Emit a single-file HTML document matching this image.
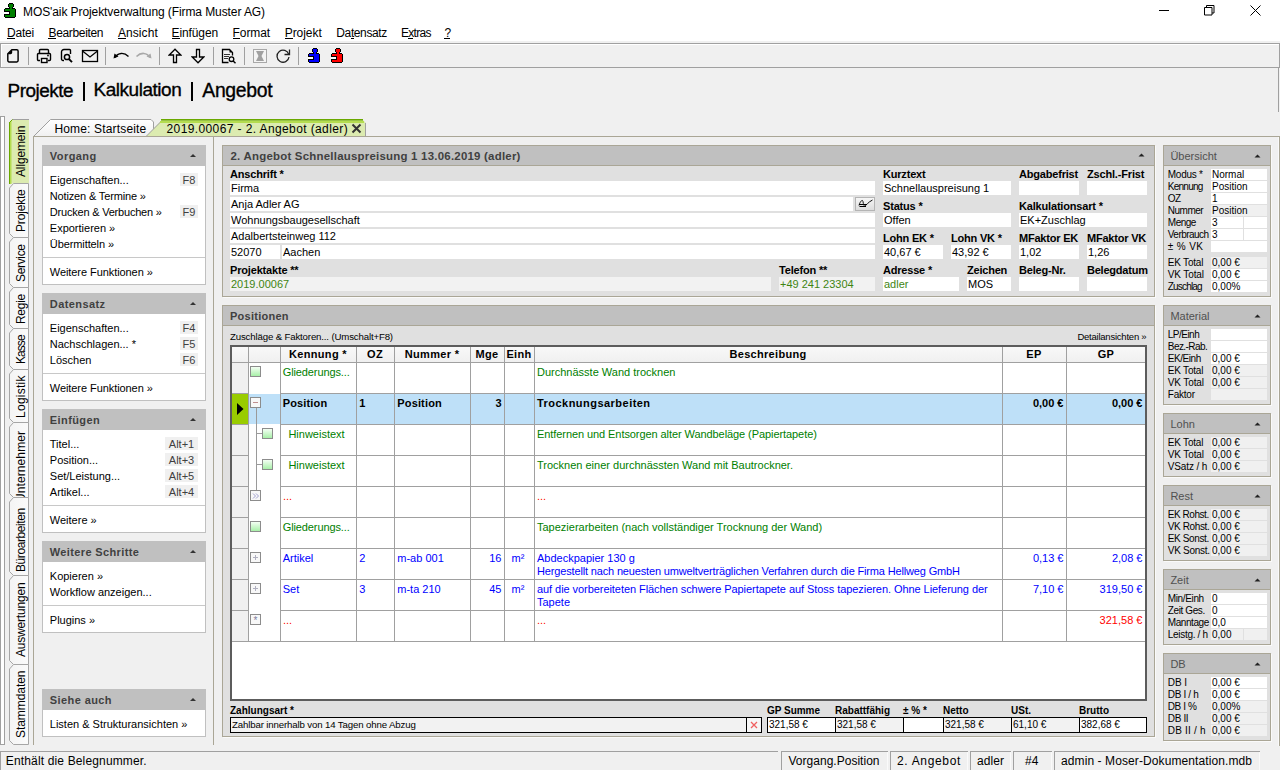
<!DOCTYPE html><html><head><meta charset="utf-8"><title>MOS'aik</title><style>
*{margin:0;padding:0}
html,body{width:1280px;height:770px;overflow:hidden;background:#f0f0f0;font-family:"Liberation Sans",sans-serif;}
.t{position:absolute;white-space:pre;line-height:1;color:#000}
.r{position:absolute}
svg{position:absolute}
</style></head><body><div class="r" style="left:0px;top:0px;width:1280px;height:41px;background:#fff;"></div>
<svg style="left:0px;top:0px" width="20" height="20" viewBox="0 0 20 20" shape-rendering="crispEdges"><rect x="9" y="3" width="4" height="1" fill="#000"/><rect x="8" y="4" width="6" height="3" fill="#000"/><rect x="9" y="7" width="4" height="1" fill="#000"/><rect x="5" y="8" width="10" height="1" fill="#000"/><rect x="4" y="9" width="12" height="8" fill="#000"/><rect x="5" y="17" width="10" height="1" fill="#000"/><rect x="9" y="4" width="4" height="3" fill="#008000"/><rect x="10" y="7" width="2" height="2" fill="#008000"/><rect x="5" y="9" width="10" height="8" fill="#008000"/><rect x="5" y="11" width="5" height="1" fill="#000"/><rect x="5" y="14" width="5" height="1" fill="#000"/><rect x="9" y="12" width="1" height="2" fill="#000"/><rect x="4" y="12" width="5" height="2" fill="#fff"/></svg>
<div class="t" style="left:23.00px;top:6px;font-size:12px;letter-spacing:-0.085px;">MOS&#x27;aik Projektverwaltung (Firma Muster AG)</div>
<div class="r" style="left:1159px;top:10px;width:10px;height:1px;background:#000;"></div>
<svg style="left:1203px;top:4px" width="13" height="13" viewBox="0 0 13 13"><path d="M1.5 3.5h7.5v7.5h-7.5z M3.5 3.5v-2h7.5v7.5h-2" fill="none" stroke="#000" stroke-width="1"/></svg>
<svg style="left:1249px;top:4px" width="13" height="13" viewBox="0 0 13 13"><path d="M1.5 1.5L11.5 11.5M11.5 1.5L1.5 11.5" stroke="#000" stroke-width="1"/></svg>
<div class="t" style="left:7.00px;top:27px;font-size:12px;letter-spacing:-0.203px;">Datei</div>
<div class="r" style="left:7px;top:38px;width:8px;height:1px;background:#000;"></div>
<div class="t" style="left:48.50px;top:27px;font-size:12px;letter-spacing:-0.343px;">Bearbeiten</div>
<div class="r" style="left:48px;top:38px;width:8px;height:1px;background:#000;"></div>
<div class="t" style="left:118.00px;top:27px;font-size:12px;letter-spacing:0.065px;">Ansicht</div>
<div class="r" style="left:118px;top:38px;width:8px;height:1px;background:#000;"></div>
<div class="t" style="left:171.60px;top:27px;font-size:12px;letter-spacing:-0.120px;">Einfügen</div>
<div class="r" style="left:172px;top:38px;width:8px;height:1px;background:#000;"></div>
<div class="t" style="left:232.60px;top:27px;font-size:12px;letter-spacing:-0.100px;">Format</div>
<div class="r" style="left:233px;top:38px;width:7px;height:1px;background:#000;"></div>
<div class="t" style="left:284.70px;top:27px;font-size:12px;letter-spacing:-0.049px;">Projekt</div>
<div class="r" style="left:285px;top:38px;width:8px;height:1px;background:#000;"></div>
<div class="t" style="left:336.30px;top:27px;font-size:12px;letter-spacing:-0.380px;">Datensatz</div>
<div class="r" style="left:351px;top:38px;width:3px;height:1px;background:#000;"></div>
<div class="t" style="left:401.00px;top:27px;font-size:12px;letter-spacing:-0.717px;">Extras</div>
<div class="r" style="left:408px;top:38px;width:5px;height:1px;background:#000;"></div>
<div class="t" style="left:444.50px;top:27px;font-size:12px;">?</div>
<div class="r" style="left:444px;top:38px;width:6px;height:1px;background:#000;"></div>
<div class="r" style="left:0px;top:43px;width:1280px;height:25px;background:#f0f0f0;border-top:1px solid #a0a0a0;border-bottom:1px solid #a0a0a0;border-left:1px solid #a0a0a0;border-right:1px solid #a0a0a0;box-sizing:border-box;"></div>
<div class="r" style="left:1px;top:44px;width:1278px;height:1px;background:#fff;"></div>
<div class="r" style="left:1px;top:44px;width:1px;height:23px;background:#fff;"></div>
<div class="r" style="left:28px;top:47px;width:1px;height:18px;background:#a0a0a0;"></div>
<div class="r" style="left:105px;top:47px;width:1px;height:18px;background:#a0a0a0;"></div>
<div class="r" style="left:159px;top:47px;width:1px;height:18px;background:#a0a0a0;"></div>
<div class="r" style="left:213px;top:47px;width:1px;height:18px;background:#a0a0a0;"></div>
<div class="r" style="left:244px;top:47px;width:1px;height:18px;background:#a0a0a0;"></div>
<div class="r" style="left:298px;top:47px;width:1px;height:18px;background:#a0a0a0;"></div>
<svg style="left:6px;top:48px" width="15" height="16" viewBox="0 0 15 16"><path d="M5.8 1.8H10.8a1.3 1.3 0 0 1 1.3 1.3V12.6a1.3 1.3 0 0 1-1.3 1.3H3.1a1.3 1.3 0 0 1-1.3-1.3V5.8Z" fill="none" stroke="#000" stroke-width="1.45" stroke-linejoin="round"/><path d="M1.5 6.2L6.2 1.5V4.6a1.6 1.6 0 0 1-1.6 1.6Z" fill="#000"/></svg>
<svg style="left:36px;top:48px" width="16" height="16" viewBox="0 0 16 16"><path d="M3.5 5V2.5a1 1 0 0 1 1-1h7a1 1 0 0 1 1 1V5" fill="none" stroke="#000" stroke-width="1.4"/><path d="M4 12.5H2.5a1 1 0 0 1-1-1V6.5a1 1 0 0 1 1-1h11a1 1 0 0 1 1 1v5a1 1 0 0 1-1 1H12" fill="none" stroke="#000" stroke-width="1.4"/><rect x="5.5" y="10.5" width="5.5" height="4" fill="#fff" stroke="#000" stroke-width="1.4"/><circle cx="12" cy="7.5" r="0.9" fill="#000"/></svg>
<svg style="left:60px;top:48px" width="14" height="16" viewBox="0 0 14 16"><path d="M10.5 6V2.5a1 1 0 0 0-1-1H4a2.5 2.5 0 0 0-2.5 2.5V11a1.5 1.5 0 0 0 1.5 1.5H4" fill="none" stroke="#000" stroke-width="1.4"/><circle cx="7" cy="9" r="2.6" fill="#f0f0f0" stroke="#000" stroke-width="1.5"/><path d="M8.8 10.8l3.2 3.4" stroke="#000" stroke-width="1.9"/></svg>
<svg style="left:81px;top:49px" width="18" height="14" viewBox="0 0 18 14"><rect x="1.5" y="1.5" width="15" height="11" fill="none" stroke="#000" stroke-width="1.3"/><path d="M1.5 2l7.5 6 7.5-6" fill="none" stroke="#000" stroke-width="1.3"/></svg>
<svg style="left:112px;top:50px" width="18" height="11" viewBox="0 0 18 11"><path d="M3 7.5C6 2.5 12 2 16.5 6.5" fill="none" stroke="#000" stroke-width="1.4"/><path d="M1.5 8.5l1-5 4 3z" fill="#000"/></svg>
<svg style="left:135px;top:50px" width="18" height="11" viewBox="0 0 18 11"><path d="M1.5 6.5C6 2 12 2.5 15 7.5" fill="none" stroke="#a8a8a8" stroke-width="1.6"/><path d="M16.5 8.5l-1-5-4 3z" fill="#a8a8a8"/></svg>
<svg style="left:168px;top:48px" width="14" height="16" viewBox="0 0 14 16"><path d="M7 1.2L1.2 7H5.5V14.5H8.5V7H12.8Z" fill="#f0f0f0" stroke="#000" stroke-width="1.3" stroke-linejoin="miter"/></svg>
<svg style="left:191px;top:48px" width="14" height="16" viewBox="0 0 14 16"><path d="M7 14.8L1.2 9H5.5V1.5H8.5V9H12.8Z" fill="#f0f0f0" stroke="#000" stroke-width="1.3"/></svg>
<svg style="left:221px;top:48px" width="16" height="16" viewBox="0 0 16 16"><path d="M7.5 14.5H1.5V1.5H8.5L11.5 4.5V7.5" fill="none" stroke="#000" stroke-width="1.3"/><path d="M8.5 1.5V4.5H11.5Z" fill="#000"/><path d="M3 6.5H9M3 8.5H8M3 10.5H7" stroke="#333" stroke-width="1"/><circle cx="10.5" cy="11.2" r="2.3" fill="#f0f0f0" stroke="#000" stroke-width="1.3"/><path d="M12.2 12.9L14.5 15.2" stroke="#000" stroke-width="1.4"/></svg>
<svg style="left:252px;top:48px" width="16" height="16" viewBox="0 0 16 16"><rect x="1.5" y="1.5" width="13" height="13" fill="#f4f4f4" stroke="#a8a8a8" stroke-width="1"/><path d="M4 3h8l-2.5 5 2.5 5h-8l2.5-5z" fill="#a0a0a0"/></svg>
<svg style="left:275px;top:48px" width="16" height="16" viewBox="0 0 16 16"><path d="M13.8 6.5A6 6 0 1 0 14 9" fill="none" stroke="#222" stroke-width="1.3"/><path d="M14.5 1.5V6.5H9.5" fill="none" stroke="#222" stroke-width="1.3"/></svg>
<svg style="left:304px;top:45px" width="20" height="20" viewBox="0 0 20 20" shape-rendering="crispEdges"><rect x="9" y="3" width="4" height="1" fill="#000"/><rect x="8" y="4" width="6" height="3" fill="#000"/><rect x="9" y="7" width="4" height="1" fill="#000"/><rect x="5" y="8" width="10" height="1" fill="#000"/><rect x="4" y="9" width="12" height="8" fill="#000"/><rect x="5" y="17" width="10" height="1" fill="#000"/><rect x="9" y="4" width="4" height="3" fill="#0000ff"/><rect x="10" y="7" width="2" height="2" fill="#0000ff"/><rect x="5" y="9" width="10" height="8" fill="#0000ff"/><rect x="5" y="11" width="5" height="1" fill="#000"/><rect x="5" y="14" width="5" height="1" fill="#000"/><rect x="9" y="12" width="1" height="2" fill="#000"/><rect x="4" y="12" width="5" height="2" fill="#fff"/></svg>
<svg style="left:327px;top:45px" width="20" height="20" viewBox="0 0 20 20" shape-rendering="crispEdges"><rect x="9" y="3" width="4" height="1" fill="#000"/><rect x="8" y="4" width="6" height="3" fill="#000"/><rect x="9" y="7" width="4" height="1" fill="#000"/><rect x="5" y="8" width="10" height="1" fill="#000"/><rect x="4" y="9" width="12" height="8" fill="#000"/><rect x="5" y="17" width="10" height="1" fill="#000"/><rect x="9" y="4" width="4" height="3" fill="#ff0000"/><rect x="10" y="7" width="2" height="2" fill="#ff0000"/><rect x="5" y="9" width="10" height="8" fill="#ff0000"/><rect x="5" y="11" width="5" height="1" fill="#000"/><rect x="5" y="14" width="5" height="1" fill="#000"/><rect x="9" y="12" width="1" height="2" fill="#000"/><rect x="4" y="12" width="5" height="2" fill="#fff"/></svg>
<div class="t" style="left:7.50px;top:82px;font-size:18.93px;letter-spacing:-0.492px;-webkit-text-stroke:0.35px #000;">Projekte</div>
<div class="r" style="left:83px;top:82px;width:2px;height:19px;background:#000;"></div>
<div class="t" style="left:93.50px;top:81px;font-size:18.97px;letter-spacing:-0.454px;-webkit-text-stroke:0.35px #000;">Kalkulation</div>
<div class="r" style="left:191px;top:82px;width:2px;height:19px;background:#000;"></div>
<div class="t" style="left:202.30px;top:81px;font-size:19.39px;letter-spacing:-0.317px;-webkit-text-stroke:0.35px #000;">Angebot</div>
<div class="r" style="left:1278px;top:68px;width:1px;height:44px;background:#a0a0a0;"></div>
<div class="r" style="left:0px;top:116px;width:5px;height:629px;background:#fff;border:1px solid #a0a0a0;box-sizing:border-box;border-width:1px 1px 1px 1px;"></div>
<svg style="left:0px;top:113px" width="34" height="76" viewBox="0 113 34 76"><path d="M9 122.5L12.5 119H29V183.5H9Z" fill="#dcebb0"/><path d="M29 119.5H12.5L9.5 122.5V183.5" fill="none" stroke="#a0a0a0" stroke-width="1"/><rect x="9" y="122" width="1" height="62" fill="#6aa800"/><rect x="10" y="121" width="1.5" height="63" fill="#b4dc50"/><path d="M9.5 122.5L12.5 119.5" stroke="#6aa800" stroke-width="1"/></svg>
<div class="t" style="left:14.5px;top:177.0px;font-size:12px;letter-spacing:-0.145px;transform-origin:0 0;transform:rotate(-90deg);">Allgemein</div>
<svg style="left:0px;top:178px" width="34" height="65" viewBox="0 178 34 65"><defs><linearGradient id="tg1" x1="0" y1="0" x2="1" y2="0"><stop offset="0" stop-color="#f4f4f4"/><stop offset="1" stop-color="#fbfbfb"/></linearGradient></defs><path d="M9.5 188L13.5 183.5H28.5V237.5H13.5L9.5 233.5Z" fill="url(#tg1)" stroke="#a6a6a6" stroke-width="1"/></svg>
<div class="t" style="left:14.5px;top:232.3px;font-size:12px;letter-spacing:-0.177px;transform-origin:0 0;transform:rotate(-90deg);">Projekte</div>
<svg style="left:0px;top:232px" width="34" height="61" viewBox="0 232 34 61"><defs><linearGradient id="tg2" x1="0" y1="0" x2="1" y2="0"><stop offset="0" stop-color="#f4f4f4"/><stop offset="1" stop-color="#fbfbfb"/></linearGradient></defs><path d="M9.5 242L13.5 237.5H28.5V287.5H13.5L9.5 283.5Z" fill="url(#tg2)" stroke="#a6a6a6" stroke-width="1"/></svg>
<div class="t" style="left:14.5px;top:282.0px;font-size:12px;letter-spacing:-0.331px;transform-origin:0 0;transform:rotate(-90deg);">Service</div>
<svg style="left:0px;top:282px" width="34" height="52" viewBox="0 282 34 52"><defs><linearGradient id="tg3" x1="0" y1="0" x2="1" y2="0"><stop offset="0" stop-color="#f4f4f4"/><stop offset="1" stop-color="#fbfbfb"/></linearGradient></defs><path d="M9.5 292L13.5 287.5H28.5V328.5H13.5L9.5 324.5Z" fill="url(#tg3)" stroke="#a6a6a6" stroke-width="1"/></svg>
<div class="t" style="left:14.5px;top:323.5px;font-size:12px;letter-spacing:-0.292px;transform-origin:0 0;transform:rotate(-90deg);">Regie</div>
<svg style="left:0px;top:323px" width="34" height="52" viewBox="0 323 34 52"><defs><linearGradient id="tg4" x1="0" y1="0" x2="1" y2="0"><stop offset="0" stop-color="#f4f4f4"/><stop offset="1" stop-color="#fbfbfb"/></linearGradient></defs><path d="M9.5 333L13.5 328.5H28.5V369.5H13.5L9.5 365.5Z" fill="url(#tg4)" stroke="#a6a6a6" stroke-width="1"/></svg>
<div class="t" style="left:14.5px;top:363.8px;font-size:12px;letter-spacing:-0.949px;transform-origin:0 0;transform:rotate(-90deg);">Kasse</div>
<svg style="left:0px;top:364px" width="34" height="64" viewBox="0 364 34 64"><defs><linearGradient id="tg5" x1="0" y1="0" x2="1" y2="0"><stop offset="0" stop-color="#f4f4f4"/><stop offset="1" stop-color="#fbfbfb"/></linearGradient></defs><path d="M9.5 374L13.5 369.5H28.5V422.5H13.5L9.5 418.5Z" fill="url(#tg5)" stroke="#a6a6a6" stroke-width="1"/></svg>
<div class="t" style="left:14.5px;top:418.3px;font-size:12px;letter-spacing:0.264px;transform-origin:0 0;transform:rotate(-90deg);">Logistik</div>
<svg style="left:0px;top:417px" width="34" height="86" viewBox="0 417 34 86"><defs><linearGradient id="tg6" x1="0" y1="0" x2="1" y2="0"><stop offset="0" stop-color="#f4f4f4"/><stop offset="1" stop-color="#fbfbfb"/></linearGradient></defs><path d="M9.5 427L13.5 422.5H28.5V497.5H13.5L9.5 493.5Z" fill="url(#tg6)" stroke="#a6a6a6" stroke-width="1"/></svg>
<div class="t" style="left:14.5px;top:501.5px;font-size:12px;letter-spacing:0.097px;transform-origin:0 0;transform:rotate(-90deg);">Unternehmer</div>
<svg style="left:0px;top:492px" width="34" height="89" viewBox="0 492 34 89"><defs><linearGradient id="tg7" x1="0" y1="0" x2="1" y2="0"><stop offset="0" stop-color="#f4f4f4"/><stop offset="1" stop-color="#fbfbfb"/></linearGradient></defs><path d="M9.5 502L13.5 497.5H28.5V575.5H13.5L9.5 571.5Z" fill="url(#tg7)" stroke="#a6a6a6" stroke-width="1"/></svg>
<div class="t" style="left:14.5px;top:572.0px;font-size:12px;letter-spacing:-0.417px;transform-origin:0 0;transform:rotate(-90deg);">Büroarbeiten</div>
<svg style="left:0px;top:570px" width="34" height="100" viewBox="0 570 34 100"><defs><linearGradient id="tg8" x1="0" y1="0" x2="1" y2="0"><stop offset="0" stop-color="#f4f4f4"/><stop offset="1" stop-color="#fbfbfb"/></linearGradient></defs><path d="M9.5 580L13.5 575.5H28.5V664.5H13.5L9.5 660.5Z" fill="url(#tg8)" stroke="#a6a6a6" stroke-width="1"/></svg>
<div class="t" style="left:14.5px;top:656.7px;font-size:12px;letter-spacing:-0.192px;transform-origin:0 0;transform:rotate(-90deg);">Auswertungen</div>
<svg style="left:0px;top:659px" width="34" height="91" viewBox="0 659 34 91"><defs><linearGradient id="tg9" x1="0" y1="0" x2="1" y2="0"><stop offset="0" stop-color="#f4f4f4"/><stop offset="1" stop-color="#fbfbfb"/></linearGradient></defs><path d="M9.5 669L13.5 664.5H28.5V744.5H13.5L9.5 740.5Z" fill="url(#tg9)" stroke="#a6a6a6" stroke-width="1"/></svg>
<div class="t" style="left:14.5px;top:738.0px;font-size:12px;letter-spacing:-0.062px;transform-origin:0 0;transform:rotate(-90deg);">Stammdaten</div>
<svg style="left:30px;top:114px" width="345" height="24" viewBox="30 114 345 24"><defs><linearGradient id="ht" x1="0" y1="0" x2="0" y2="1"><stop offset="0" stop-color="#ffffff"/><stop offset="1" stop-color="#f0f0f0"/></linearGradient></defs><path d="M33.5 136.5L50.5 119.5H151L153.5 122V136.5Z" fill="url(#ht)" stroke="#a0a0a0" stroke-width="1"/><path d="M146 136.5L162 120H363L366 123V136.5Z" fill="#dcebb0"/><path d="M146.5 136L161.5 121" fill="none" stroke="#a0a0a0" stroke-width="1"/><rect x="160" y="121" width="204" height="2" fill="#b4dc50"/><rect x="161" y="119" width="202" height="1.6" fill="#6aa800"/><path d="M365.5 123V136" stroke="#a0a0a0" stroke-width="1"/></svg>
<div class="t" style="left:54.40px;top:122.6px;font-size:12px;letter-spacing:0.166px;">Home: Startseite</div>
<div class="t" style="left:166.50px;top:122.6px;font-size:12px;letter-spacing:0.390px;">2019.00067 - 2. Angebot (adler)</div>
<svg style="left:351px;top:123px" width="11" height="11" viewBox="0 0 11 11"><path d="M1.5 1.5L9.5 9.5M9.5 1.5L1.5 9.5" stroke="#333" stroke-width="2"/></svg>
<div class="r" style="left:33px;top:136px;width:1247px;height:1px;background:#aaa696;"></div>
<div class="r" style="left:33px;top:136px;width:1px;height:609px;background:#aaa696;"></div>
<div class="r" style="left:1279px;top:136px;width:1px;height:610px;background:#aaa696;"></div>
<div class="r" style="left:1278px;top:137px;width:1px;height:609px;background:#fafafa;"></div>
<div class="r" style="left:213px;top:137px;width:1px;height:608px;background:#aaa696;"></div>
<div class="r" style="left:42px;top:145px;width:164px;height:21px;background:#c0c0c0;"></div>
<div class="t" style="left:49.80px;top:151px;font-size:11px;font-weight:bold;color:#404040;letter-spacing:0.438px;">Vorgang</div>
<svg style="left:189px;top:153px" width="8" height="5" viewBox="0 0 8 5"><path d="M1 4L4 1L7 4Z" fill="#333"/></svg>
<div class="r" style="left:42px;top:166px;width:164px;height:119px;background:#fff;border:1px solid #c0c0c0;border-top:none;box-sizing:border-box;"></div>
<div class="t" style="left:49.80px;top:175px;font-size:11px;">Eigenschaften...</div>
<div class="r" style="left:180px;top:173px;width:18px;height:13px;background:#f0f0f0;"></div>
<div class="t" style="left:182.58px;top:175px;font-size:11px;color:#404040;">F8</div>
<div class="t" style="left:49.80px;top:191px;font-size:11px;letter-spacing:-0.152px;">Notizen &amp; Termine »</div>
<div class="t" style="left:49.80px;top:207px;font-size:11px;letter-spacing:-0.203px;">Drucken &amp; Verbuchen »</div>
<div class="r" style="left:180px;top:205px;width:18px;height:13px;background:#f0f0f0;"></div>
<div class="t" style="left:182.58px;top:207px;font-size:11px;color:#404040;">F9</div>
<div class="t" style="left:49.80px;top:223px;font-size:11px;">Exportieren »</div>
<div class="t" style="left:49.80px;top:239px;font-size:11px;letter-spacing:-0.095px;">Übermitteln »</div>
<div class="r" style="left:43px;top:257px;width:162px;height:1px;background:#c8c8c8;"></div>
<div class="t" style="left:49.80px;top:267px;font-size:11px;letter-spacing:-0.071px;">Weitere Funktionen »</div>
<div class="r" style="left:42px;top:293px;width:164px;height:21px;background:#c0c0c0;"></div>
<div class="t" style="left:49.80px;top:299px;font-size:11px;font-weight:bold;color:#404040;letter-spacing:0.404px;">Datensatz</div>
<svg style="left:189px;top:301px" width="8" height="5" viewBox="0 0 8 5"><path d="M1 4L4 1L7 4Z" fill="#333"/></svg>
<div class="r" style="left:42px;top:314px;width:164px;height:87px;background:#fff;border:1px solid #c0c0c0;border-top:none;box-sizing:border-box;"></div>
<div class="t" style="left:49.80px;top:323px;font-size:11px;">Eigenschaften...</div>
<div class="r" style="left:180px;top:321px;width:18px;height:13px;background:#f0f0f0;"></div>
<div class="t" style="left:182.58px;top:323px;font-size:11px;color:#404040;">F4</div>
<div class="t" style="left:49.80px;top:339px;font-size:11px;">Nachschlagen... *</div>
<div class="r" style="left:180px;top:337px;width:18px;height:13px;background:#f0f0f0;"></div>
<div class="t" style="left:182.58px;top:339px;font-size:11px;color:#404040;">F5</div>
<div class="t" style="left:49.80px;top:355px;font-size:11px;">Löschen</div>
<div class="r" style="left:180px;top:353px;width:18px;height:13px;background:#f0f0f0;"></div>
<div class="t" style="left:182.58px;top:355px;font-size:11px;color:#404040;">F6</div>
<div class="r" style="left:43px;top:373px;width:162px;height:1px;background:#c8c8c8;"></div>
<div class="t" style="left:49.80px;top:383px;font-size:11px;letter-spacing:-0.071px;">Weitere Funktionen »</div>
<div class="r" style="left:42px;top:409px;width:164px;height:21px;background:#c0c0c0;"></div>
<div class="t" style="left:49.80px;top:415px;font-size:11px;font-weight:bold;color:#404040;letter-spacing:0.412px;">Einfügen</div>
<svg style="left:189px;top:417px" width="8" height="5" viewBox="0 0 8 5"><path d="M1 4L4 1L7 4Z" fill="#333"/></svg>
<div class="r" style="left:42px;top:430px;width:164px;height:103px;background:#fff;border:1px solid #c0c0c0;border-top:none;box-sizing:border-box;"></div>
<div class="t" style="left:49.80px;top:439px;font-size:11px;">Titel...</div>
<div class="r" style="left:165px;top:437px;width:33px;height:13px;background:#f0f0f0;"></div>
<div class="t" style="left:168.80px;top:439px;font-size:11px;color:#404040;">Alt+1</div>
<div class="t" style="left:49.80px;top:455px;font-size:11px;">Position...</div>
<div class="r" style="left:165px;top:453px;width:33px;height:13px;background:#f0f0f0;"></div>
<div class="t" style="left:168.80px;top:455px;font-size:11px;color:#404040;">Alt+3</div>
<div class="t" style="left:49.80px;top:471px;font-size:11px;">Set/Leistung...</div>
<div class="r" style="left:165px;top:469px;width:33px;height:13px;background:#f0f0f0;"></div>
<div class="t" style="left:168.80px;top:471px;font-size:11px;color:#404040;">Alt+5</div>
<div class="t" style="left:49.80px;top:487px;font-size:11px;">Artikel...</div>
<div class="r" style="left:165px;top:485px;width:33px;height:13px;background:#f0f0f0;"></div>
<div class="t" style="left:168.80px;top:487px;font-size:11px;color:#404040;">Alt+4</div>
<div class="r" style="left:43px;top:505px;width:162px;height:1px;background:#c8c8c8;"></div>
<div class="t" style="left:49.80px;top:515px;font-size:11px;">Weitere »</div>
<div class="r" style="left:42px;top:541px;width:164px;height:21px;background:#c0c0c0;"></div>
<div class="t" style="left:49.80px;top:547px;font-size:11px;font-weight:bold;color:#404040;letter-spacing:0.366px;">Weitere Schritte</div>
<svg style="left:189px;top:549px" width="8" height="5" viewBox="0 0 8 5"><path d="M1 4L4 1L7 4Z" fill="#333"/></svg>
<div class="r" style="left:42px;top:562px;width:164px;height:71px;background:#fff;border:1px solid #c0c0c0;border-top:none;box-sizing:border-box;"></div>
<div class="t" style="left:49.80px;top:571px;font-size:11px;">Kopieren »</div>
<div class="t" style="left:49.80px;top:587px;font-size:11px;">Workflow anzeigen...</div>
<div class="r" style="left:43px;top:605px;width:162px;height:1px;background:#c8c8c8;"></div>
<div class="t" style="left:49.80px;top:615px;font-size:11px;">Plugins »</div>
<div class="r" style="left:42px;top:689px;width:164px;height:21px;background:#c0c0c0;"></div>
<div class="t" style="left:49.80px;top:695px;font-size:11px;font-weight:bold;color:#404040;letter-spacing:0.407px;">Siehe auch</div>
<svg style="left:189px;top:697px" width="8" height="5" viewBox="0 0 8 5"><path d="M1 4L4 1L7 4Z" fill="#333"/></svg>
<div class="r" style="left:42px;top:710px;width:164px;height:27px;background:#fff;border:1px solid #c0c0c0;border-top:none;box-sizing:border-box;"></div>
<div class="t" style="left:49.80px;top:719px;font-size:11px;">Listen &amp; Strukturansichten »</div>
<div class="r" style="left:222px;top:145px;width:933px;height:152px;background:#e0e0e0;border:1px solid #aaa696;box-sizing:border-box;box-shadow:1px 1px 0 #fafafa;"></div>
<div class="r" style="left:223px;top:146px;width:931px;height:19px;background:#c0c0c0;"></div>
<div class="r" style="left:223px;top:165px;width:931px;height:1px;background:#aaa696;"></div>
<div class="t" style="left:230.50px;top:151px;font-size:11.45px;font-weight:bold;color:#404040;letter-spacing:0.230px;">2. Angebot Schnellauspreisung 1 13.06.2019 (adler)</div>
<svg style="left:1137px;top:152px" width="9" height="6" viewBox="0 0 9 6"><path d="M1.5 4.5L4.5 1.5L7.5 4.5Z" fill="#222"/></svg>
<div class="t" style="left:230.00px;top:169px;font-size:11px;font-weight:bold;letter-spacing:-0.177px;">Anschrift *</div>
<div class="r" style="left:230px;top:181px;width:645px;height:14px;background:#fff;"></div>
<div class="t" style="left:231.00px;top:183px;font-size:11px;">Firma</div>
<div class="r" style="left:230px;top:197px;width:623px;height:14px;background:#fff;"></div>
<div class="t" style="left:231.00px;top:199px;font-size:11px;">Anja Adler AG</div>
<div class="r" style="left:855px;top:197px;width:20px;height:14px;background:linear-gradient(#f6f6f6,#dcdcdc);border:1px solid #b4b4b4;box-sizing:border-box;"></div>
<svg style="left:857px;top:197px" width="17" height="12" viewBox="0 0 17 12"><path d="M2 8.5C3 5 4.5 3 5.5 3.5S6 9 7.5 9C9 9 11 5 15.5 3" fill="none" stroke="#111" stroke-width="1"/><path d="M2 7.5H10M2.5 9.5H9" stroke="#000" stroke-width="1"/></svg>
<div class="r" style="left:230px;top:213px;width:645px;height:14px;background:#fff;"></div>
<div class="t" style="left:231.00px;top:215px;font-size:11px;">Wohnungsbaugesellschaft</div>
<div class="r" style="left:230px;top:229px;width:645px;height:14px;background:#fff;"></div>
<div class="t" style="left:231.00px;top:231px;font-size:11px;">Adalbertsteinweg 112</div>
<div class="r" style="left:230px;top:245px;width:50px;height:14px;background:#fff;"></div>
<div class="t" style="left:231.00px;top:247px;font-size:11px;">52070</div>
<div class="r" style="left:282px;top:245px;width:593px;height:14px;background:#fff;"></div>
<div class="t" style="left:283.00px;top:247px;font-size:11px;">Aachen</div>
<div class="t" style="left:230.00px;top:265px;font-size:11px;font-weight:bold;letter-spacing:-0.177px;">Projektakte **</div>
<div class="r" style="left:230px;top:277px;width:541px;height:14px;background:#f2f2f2;"></div>
<div class="t" style="left:231.00px;top:279px;font-size:11px;color:#3f8512;">2019.00067</div>
<div class="t" style="left:779.00px;top:265px;font-size:11px;font-weight:bold;letter-spacing:-0.175px;">Telefon **</div>
<div class="r" style="left:779px;top:277px;width:96px;height:14px;background:#f2f2f2;"></div>
<div class="t" style="left:780.00px;top:279px;font-size:11px;color:#3f8512;">+49 241 23304</div>
<div class="t" style="left:883.00px;top:169px;font-size:11px;font-weight:bold;letter-spacing:-0.192px;">Kurztext</div>
<div class="r" style="left:883px;top:181px;width:128px;height:14px;background:#fff;"></div>
<div class="t" style="left:884.00px;top:183px;font-size:11px;">Schnellauspreisung 1</div>
<div class="t" style="left:1019.00px;top:169px;font-size:11px;font-weight:bold;letter-spacing:-0.194px;">Abgabefrist</div>
<div class="r" style="left:1019px;top:181px;width:60px;height:14px;background:#fff;"></div>
<div class="t" style="left:1087.00px;top:169px;font-size:11px;font-weight:bold;letter-spacing:-0.173px;">Zschl.-Frist</div>
<div class="r" style="left:1087px;top:181px;width:60px;height:14px;background:#fff;"></div>
<div class="t" style="left:883.00px;top:201px;font-size:11px;font-weight:bold;letter-spacing:-0.179px;">Status *</div>
<div class="r" style="left:883px;top:213px;width:128px;height:14px;background:#fff;"></div>
<div class="t" style="left:884.00px;top:215px;font-size:11px;">Offen</div>
<div class="t" style="left:1019.00px;top:201px;font-size:11px;font-weight:bold;letter-spacing:-0.179px;">Kalkulationsart *</div>
<div class="r" style="left:1019px;top:213px;width:128px;height:14px;background:#fff;"></div>
<div class="t" style="left:1020.00px;top:215px;font-size:11px;">EK+Zuschlag</div>
<div class="t" style="left:883.00px;top:233px;font-size:11px;font-weight:bold;letter-spacing:-0.204px;">Lohn EK *</div>
<div class="r" style="left:883px;top:245px;width:60px;height:14px;background:#fff;"></div>
<div class="t" style="left:884.00px;top:247px;font-size:11px;">40,67 €</div>
<div class="t" style="left:951.00px;top:233px;font-size:11px;font-weight:bold;letter-spacing:-0.204px;">Lohn VK *</div>
<div class="r" style="left:951px;top:245px;width:60px;height:14px;background:#fff;"></div>
<div class="t" style="left:952.00px;top:247px;font-size:11px;">43,92 €</div>
<div class="t" style="left:1019.00px;top:233px;font-size:11px;font-weight:bold;letter-spacing:-0.214px;">MFaktor EK</div>
<div class="r" style="left:1019px;top:245px;width:60px;height:14px;background:#fff;"></div>
<div class="t" style="left:1020.00px;top:247px;font-size:11px;">1,02</div>
<div class="t" style="left:1087.00px;top:233px;font-size:11px;font-weight:bold;letter-spacing:-0.214px;">MFaktor VK</div>
<div class="r" style="left:1087px;top:245px;width:60px;height:14px;background:#fff;"></div>
<div class="t" style="left:1088.00px;top:247px;font-size:11px;">1,26</div>
<div class="t" style="left:883.00px;top:265px;font-size:11px;font-weight:bold;letter-spacing:-0.197px;">Adresse *</div>
<div class="r" style="left:883px;top:277px;width:76px;height:14px;background:#fff;"></div>
<div class="t" style="left:884.00px;top:279px;font-size:11px;color:#3f8512;">adler</div>
<div class="t" style="left:967.00px;top:265px;font-size:11px;font-weight:bold;letter-spacing:-0.208px;">Zeichen</div>
<div class="r" style="left:967px;top:277px;width:44px;height:14px;background:#fff;"></div>
<div class="t" style="left:968.00px;top:279px;font-size:11px;">MOS</div>
<div class="t" style="left:1019.00px;top:265px;font-size:11px;font-weight:bold;letter-spacing:-0.188px;">Beleg-Nr.</div>
<div class="r" style="left:1019px;top:277px;width:60px;height:14px;background:#fff;"></div>
<div class="t" style="left:1087.00px;top:265px;font-size:11px;font-weight:bold;letter-spacing:-0.220px;">Belegdatum</div>
<div class="r" style="left:1087px;top:277px;width:60px;height:14px;background:#fff;"></div>
<div class="r" style="left:222px;top:305px;width:933px;height:432px;background:#e0e0e0;border:1px solid #aaa696;box-sizing:border-box;box-shadow:1px 1px 0 #fafafa;"></div>
<div class="r" style="left:223px;top:306px;width:931px;height:19px;background:#c0c0c0;"></div>
<div class="r" style="left:223px;top:325px;width:931px;height:1px;background:#aaa696;"></div>
<div class="t" style="left:230.00px;top:311px;font-size:11px;font-weight:bold;color:#404040;letter-spacing:0.250px;">Positionen</div>
<div class="t" style="left:230.00px;top:332px;font-size:9.66px;letter-spacing:-0.158px;">Zuschläge &amp; Faktoren... (Umschalt+F8)</div>
<div class="t" style="left:1077.40px;top:332px;font-size:9.5px;letter-spacing:-0.227px;">Detailansichten »</div>
<div class="r" style="left:230px;top:345px;width:917px;height:356px;background:#fff;border:2px solid #5c5c5c;box-sizing:border-box;"></div>
<div class="r" style="left:232px;top:347px;width:913px;height:15px;background:linear-gradient(#f8f8f8,#f0f0f0);"></div>
<div class="r" style="left:232px;top:363px;width:16px;height:278px;background:#f0f0f0;"></div>
<div class="r" style="left:232px;top:362px;width:913px;height:1px;background:#a0a0a0;"></div>
<div class="r" style="left:232px;top:393px;width:17px;height:1px;background:#a0a0a0;"></div>
<div class="r" style="left:280px;top:393px;width:865px;height:1px;background:#a0a0a0;"></div>
<div class="r" style="left:232px;top:424px;width:17px;height:1px;background:#a0a0a0;"></div>
<div class="r" style="left:280px;top:424px;width:865px;height:1px;background:#a0a0a0;"></div>
<div class="r" style="left:232px;top:455px;width:17px;height:1px;background:#a0a0a0;"></div>
<div class="r" style="left:280px;top:455px;width:865px;height:1px;background:#a0a0a0;"></div>
<div class="r" style="left:232px;top:486px;width:17px;height:1px;background:#a0a0a0;"></div>
<div class="r" style="left:280px;top:486px;width:865px;height:1px;background:#a0a0a0;"></div>
<div class="r" style="left:232px;top:517px;width:17px;height:1px;background:#a0a0a0;"></div>
<div class="r" style="left:280px;top:517px;width:865px;height:1px;background:#a0a0a0;"></div>
<div class="r" style="left:232px;top:548px;width:17px;height:1px;background:#a0a0a0;"></div>
<div class="r" style="left:280px;top:548px;width:865px;height:1px;background:#a0a0a0;"></div>
<div class="r" style="left:232px;top:579px;width:17px;height:1px;background:#a0a0a0;"></div>
<div class="r" style="left:280px;top:579px;width:865px;height:1px;background:#a0a0a0;"></div>
<div class="r" style="left:232px;top:610px;width:17px;height:1px;background:#a0a0a0;"></div>
<div class="r" style="left:280px;top:610px;width:865px;height:1px;background:#a0a0a0;"></div>
<div class="r" style="left:232px;top:641px;width:913px;height:1px;background:#a0a0a0;"></div>
<div class="r" style="left:249px;top:394px;width:896px;height:30px;background:#bee0f8;"></div>
<div class="r" style="left:232px;top:394px;width:16px;height:30px;background:#99cc00;"></div>
<svg style="left:236px;top:402px" width="8" height="14" viewBox="0 0 8 14"><path d="M1 1L7.5 7L1 13Z" fill="#000"/></svg>
<div class="r" style="left:248px;top:347px;width:1px;height:295px;background:#a0a0a0;"></div>
<div class="r" style="left:280px;top:347px;width:1px;height:295px;background:#a0a0a0;"></div>
<div class="r" style="left:356px;top:347px;width:1px;height:295px;background:#a0a0a0;"></div>
<div class="r" style="left:394px;top:347px;width:1px;height:295px;background:#a0a0a0;"></div>
<div class="r" style="left:470px;top:347px;width:1px;height:295px;background:#a0a0a0;"></div>
<div class="r" style="left:504px;top:347px;width:1px;height:295px;background:#a0a0a0;"></div>
<div class="r" style="left:534px;top:347px;width:1px;height:295px;background:#a0a0a0;"></div>
<div class="r" style="left:1002px;top:347px;width:1px;height:295px;background:#a0a0a0;"></div>
<div class="r" style="left:1066px;top:347px;width:1px;height:295px;background:#a0a0a0;"></div>
<div class="t" style="left:289.12px;top:349px;font-size:11px;font-weight:bold;letter-spacing:0.306px;">Kennung *</div>
<div class="t" style="left:366.98px;top:349px;font-size:11px;font-weight:bold;letter-spacing:0.382px;">OZ</div>
<div class="t" style="left:404.72px;top:349px;font-size:11px;font-weight:bold;letter-spacing:0.325px;">Nummer *</div>
<div class="t" style="left:475.45px;top:349px;font-size:11px;font-weight:bold;letter-spacing:0.367px;">Mge</div>
<div class="t" style="left:506.48px;top:349px;font-size:11px;font-weight:bold;letter-spacing:0.298px;">Einh</div>
<div class="t" style="left:729.48px;top:349px;font-size:11px;font-weight:bold;letter-spacing:0.306px;">Beschreibung</div>
<div class="t" style="left:1026.29px;top:349px;font-size:11px;font-weight:bold;letter-spacing:0.367px;">EP</div>
<div class="t" style="left:1097.65px;top:349px;font-size:11px;font-weight:bold;letter-spacing:0.398px;">GP</div>
<div class="r" style="left:256px;top:408px;width:1px;height:82px;background:#9a9a9a;"></div>
<div class="r" style="left:257px;top:433px;width:5px;height:1px;background:#9a9a9a;"></div>
<div class="r" style="left:257px;top:464px;width:5px;height:1px;background:#9a9a9a;"></div>
<div class="r" style="left:250px;top:366px;width:11px;height:11px;background:linear-gradient(#f4fff4,#a8f0a8);border:1px solid #8c8c8c;box-sizing:border-box;"></div>
<div class="r" style="left:250px;top:397px;width:11px;height:11px;background:#f8f8f8;border:1px solid #8c8c8c;box-sizing:border-box;"></div>
<div class="r" style="left:253px;top:402px;width:5px;height:1px;background:#c09090;"></div>
<div class="r" style="left:262px;top:428px;width:11px;height:11px;background:linear-gradient(#f4fff4,#a8f0a8);border:1px solid #8c8c8c;box-sizing:border-box;"></div>
<div class="r" style="left:262px;top:459px;width:11px;height:11px;background:linear-gradient(#f4fff4,#a8f0a8);border:1px solid #8c8c8c;box-sizing:border-box;"></div>
<div class="r" style="left:250px;top:490px;width:11px;height:11px;background:#f8f8f8;border:1px solid #8c8c8c;box-sizing:border-box;"></div>
<svg style="left:252px;top:492px" width="8" height="8" viewBox="0 0 8 8"><path d="M1 1.5L3.5 4L1 6.5M4 1.5L6.5 4L4 6.5" fill="none" stroke="#a0a0d0" stroke-width="1"/></svg>
<div class="r" style="left:250px;top:521px;width:11px;height:11px;background:linear-gradient(#f4fff4,#a8f0a8);border:1px solid #8c8c8c;box-sizing:border-box;"></div>
<div class="r" style="left:250px;top:552px;width:11px;height:11px;background:#f8f8f8;border:1px solid #8c8c8c;box-sizing:border-box;"></div>
<div class="r" style="left:253px;top:557px;width:5px;height:1px;background:#b0b0c0;"></div>
<div class="r" style="left:255px;top:555px;width:1px;height:5px;background:#b0b0c0;"></div>
<div class="r" style="left:250px;top:583px;width:11px;height:11px;background:#f8f8f8;border:1px solid #8c8c8c;box-sizing:border-box;"></div>
<div class="r" style="left:253px;top:588px;width:5px;height:1px;background:#b0b0c0;"></div>
<div class="r" style="left:255px;top:586px;width:1px;height:5px;background:#b0b0c0;"></div>
<div class="r" style="left:250px;top:614px;width:11px;height:11px;background:#f8f8f8;border:1px solid #8c8c8c;box-sizing:border-box;"></div>
<div class="t" style="left:253.55px;top:616px;font-size:10px;color:#8080a0;">*</div>
<div class="t" style="left:282.70px;top:367px;font-size:11px;color:#008000;letter-spacing:-0.109px;">Gliederungs...</div>
<div class="t" style="left:537.00px;top:367px;font-size:11px;color:#008000;">Durchnässte Wand trocknen</div>
<div class="t" style="left:282.70px;top:398px;font-size:11px;font-weight:bold;letter-spacing:0.149px;">Position</div>
<div class="t" style="left:359.30px;top:398px;font-size:11px;font-weight:bold;">1</div>
<div class="t" style="left:397.30px;top:398px;font-size:11px;font-weight:bold;letter-spacing:0.149px;">Position</div>
<div class="t" style="left:495.38px;top:398px;font-size:11px;font-weight:bold;">3</div>
<div class="t" style="left:537.00px;top:398px;font-size:11px;font-weight:bold;letter-spacing:0.468px;">Trocknungsarbeiten</div>
<div class="t" style="left:1032.88px;top:398px;font-size:11px;font-weight:bold;">0,00 €</div>
<div class="t" style="left:1111.88px;top:398px;font-size:11px;font-weight:bold;">0,00 €</div>
<div class="t" style="left:288.40px;top:429px;font-size:11px;color:#008000;">Hinweistext</div>
<div class="t" style="left:537.00px;top:429px;font-size:11px;color:#008000;letter-spacing:-0.076px;">Entfernen und Entsorgen alter Wandbeläge (Papiertapete)</div>
<div class="t" style="left:288.40px;top:460px;font-size:11px;color:#008000;">Hinweistext</div>
<div class="t" style="left:537.00px;top:460px;font-size:11px;color:#008000;">Trocknen einer durchnässten Wand mit Bautrockner.</div>
<div class="t" style="left:283.00px;top:491px;font-size:11px;color:#ff0000;">...</div>
<div class="t" style="left:537.00px;top:491px;font-size:11px;color:#ff0000;">...</div>
<div class="t" style="left:282.70px;top:522px;font-size:11px;color:#008000;letter-spacing:-0.109px;">Gliederungs...</div>
<div class="t" style="left:537.00px;top:522px;font-size:11px;color:#008000;">Tapezierarbeiten (nach vollständiger Trocknung der Wand)</div>
<div class="t" style="left:282.70px;top:553px;font-size:11px;color:#0000ff;">Artikel</div>
<div class="t" style="left:359.30px;top:553px;font-size:11px;color:#0000ff;">2</div>
<div class="t" style="left:397.30px;top:553px;font-size:11px;color:#0000ff;">m-ab 001</div>
<div class="t" style="left:489.25px;top:553px;font-size:11px;color:#0000ff;">16</div>
<div class="t" style="left:511.50px;top:553px;font-size:11px;color:#0000ff;">m²</div>
<div class="t" style="left:537.00px;top:553px;font-size:11px;color:#0000ff;">Abdeckpapier 130 g</div>
<div class="t" style="left:1032.88px;top:553px;font-size:11px;color:#0000ff;">0,13 €</div>
<div class="t" style="left:1111.88px;top:553px;font-size:11px;color:#0000ff;">2,08 €</div>
<div class="t" style="left:537.00px;top:565.5px;font-size:11px;color:#0000ff;letter-spacing:-0.156px;">Hergestellt nach neuesten umweltverträglichen Verfahren durch die Firma Hellweg GmbH</div>
<div class="t" style="left:282.70px;top:584px;font-size:11px;color:#0000ff;">Set</div>
<div class="t" style="left:359.30px;top:584px;font-size:11px;color:#0000ff;">3</div>
<div class="t" style="left:397.30px;top:584px;font-size:11px;color:#0000ff;">m-ta 210</div>
<div class="t" style="left:489.25px;top:584px;font-size:11px;color:#0000ff;">45</div>
<div class="t" style="left:511.50px;top:584px;font-size:11px;color:#0000ff;">m²</div>
<div class="t" style="left:537.00px;top:584px;font-size:11px;color:#0000ff;letter-spacing:-0.061px;">auf die vorbereiteten Flächen schwere Papiertapete auf Stoss tapezieren. Ohne Lieferung der</div>
<div class="t" style="left:1032.88px;top:584px;font-size:11px;color:#0000ff;">7,10 €</div>
<div class="t" style="left:1099.62px;top:584px;font-size:11px;color:#0000ff;">319,50 €</div>
<div class="t" style="left:537.00px;top:597px;font-size:11px;color:#0000ff;">Tapete</div>
<div class="t" style="left:283.00px;top:615px;font-size:11px;color:#ff0000;">...</div>
<div class="t" style="left:537.00px;top:615px;font-size:11px;color:#ff0000;">...</div>
<div class="t" style="left:1099.62px;top:615px;font-size:11px;color:#ff0000;">321,58 €</div>
<div class="t" style="left:230.00px;top:706px;font-size:10px;font-weight:bold;">Zahlungsart *</div>
<div class="t" style="left:767.00px;top:706px;font-size:10px;font-weight:bold;letter-spacing:-0.021px;">GP Summe</div>
<div class="t" style="left:835.00px;top:706px;font-size:10px;font-weight:bold;">Rabattfähig</div>
<div class="t" style="left:903.00px;top:706px;font-size:10px;font-weight:bold;">± % *</div>
<div class="t" style="left:943.00px;top:706px;font-size:10px;font-weight:bold;">Netto</div>
<div class="t" style="left:1011.00px;top:706px;font-size:10px;font-weight:bold;">USt.</div>
<div class="t" style="left:1079.00px;top:706px;font-size:10px;font-weight:bold;">Brutto</div>
<div class="r" style="left:230px;top:717px;width:518px;height:16px;background:#f2f2f2;border:1px solid #000;box-sizing:border-box;"></div>
<div class="t" style="left:232.00px;top:720px;font-size:9.69px;letter-spacing:-0.147px;">Zahlbar innerhalb von 14 Tagen ohne Abzug</div>
<div class="r" style="left:746px;top:717px;width:16px;height:16px;background:#f6f6f6;border:1px solid #000;box-sizing:border-box;"></div>
<svg style="left:750px;top:721px" width="8" height="8" viewBox="0 0 8 8"><path d="M1 1L7 7M7 1L1 7" stroke="#f06060" stroke-width="1.3"/></svg>
<div class="r" style="left:767px;top:717px;width:69px;height:16px;background:#fff;border:1px solid #000;box-sizing:border-box;"></div>
<div class="t" style="left:769.00px;top:720px;font-size:10px;">321,58 €</div>
<div class="r" style="left:835px;top:717px;width:69px;height:16px;background:#f2f2f2;border:1px solid #000;box-sizing:border-box;"></div>
<div class="t" style="left:837.00px;top:720px;font-size:10px;">321,58 €</div>
<div class="r" style="left:903px;top:717px;width:41px;height:16px;background:#fff;border:1px solid #000;box-sizing:border-box;"></div>
<div class="r" style="left:943px;top:717px;width:69px;height:16px;background:#f2f2f2;border:1px solid #000;box-sizing:border-box;"></div>
<div class="t" style="left:945.00px;top:720px;font-size:10px;">321,58 €</div>
<div class="r" style="left:1011px;top:717px;width:69px;height:16px;background:#f2f2f2;border:1px solid #000;box-sizing:border-box;"></div>
<div class="t" style="left:1013.00px;top:720px;font-size:10px;">61,10 €</div>
<div class="r" style="left:1079px;top:717px;width:68px;height:16px;background:#fff;border:1px solid #000;box-sizing:border-box;"></div>
<div class="t" style="left:1081.00px;top:720px;font-size:10px;">382,68 €</div>
<div class="r" style="left:1163px;top:145px;width:108px;height:152px;background:#e0e0e0;border:1px solid #aaa696;box-sizing:border-box;box-shadow:1px 1px 0 #fafafa;"></div>
<div class="r" style="left:1164px;top:146px;width:106px;height:19px;background:#c0c0c0;"></div>
<div class="r" style="left:1164px;top:165px;width:106px;height:1px;background:#aaa696;"></div>
<div class="t" style="left:1170.40px;top:151px;font-size:11px;color:#505050;">Übersicht</div>
<svg style="left:1253px;top:153px" width="9" height="6" viewBox="0 0 9 6"><path d="M1.5 4.5L4.5 1.5L7.5 4.5Z" fill="#222"/></svg>
<div class="r" style="left:1211px;top:169px;width:56px;height:11px;background:#fff;"></div>
<div class="t" style="left:1167.80px;top:170px;font-size:10px;letter-spacing:-0.270px;">Modus *</div>
<div class="t" style="left:1212.00px;top:170px;font-size:10px;">Normal</div>
<div class="r" style="left:1211px;top:181px;width:56px;height:11px;background:#fff;"></div>
<div class="t" style="left:1167.80px;top:182px;font-size:10px;letter-spacing:-0.750px;">Kennung</div>
<div class="t" style="left:1212.00px;top:182px;font-size:10px;">Position</div>
<div class="r" style="left:1211px;top:193px;width:56px;height:11px;background:#fff;"></div>
<div class="t" style="left:1167.80px;top:194px;font-size:10px;letter-spacing:-0.556px;">OZ</div>
<div class="t" style="left:1212.00px;top:194px;font-size:10px;">1</div>
<div class="r" style="left:1211px;top:205px;width:56px;height:11px;background:#f0f0f0;"></div>
<div class="t" style="left:1167.80px;top:206px;font-size:10px;letter-spacing:-0.511px;">Nummer</div>
<div class="t" style="left:1212.00px;top:206px;font-size:10px;">Position</div>
<div class="r" style="left:1211px;top:217px;width:56px;height:11px;background:#fff;"></div>
<div class="r" style="left:1243px;top:217px;width:1px;height:11px;background:#e0e0e0;"></div>
<div class="t" style="left:1167.80px;top:218px;font-size:10px;letter-spacing:-0.489px;">Menge</div>
<div class="t" style="left:1212.00px;top:218px;font-size:10px;">3</div>
<div class="r" style="left:1211px;top:229px;width:56px;height:11px;background:#fff;"></div>
<div class="r" style="left:1243px;top:229px;width:1px;height:11px;background:#e0e0e0;"></div>
<div class="t" style="left:1167.80px;top:230px;font-size:10px;letter-spacing:-0.544px;">Verbrauch</div>
<div class="t" style="left:1212.00px;top:230px;font-size:10px;">3</div>
<div class="r" style="left:1211px;top:241px;width:56px;height:11px;background:#fff;"></div>
<div class="t" style="left:1167.80px;top:242px;font-size:10px;letter-spacing:0.353px;">± % VK</div>
<div class="r" style="left:1211px;top:257px;width:56px;height:11px;background:#f0f0f0;"></div>
<div class="t" style="left:1167.80px;top:258px;font-size:10px;letter-spacing:-0.208px;">EK Total</div>
<div class="t" style="left:1212.00px;top:258px;font-size:10px;">0,00 €</div>
<div class="r" style="left:1211px;top:269px;width:56px;height:11px;background:#fff;"></div>
<div class="t" style="left:1167.80px;top:270px;font-size:10px;letter-spacing:-0.133px;">VK Total</div>
<div class="t" style="left:1212.00px;top:270px;font-size:10px;">0,00 €</div>
<div class="r" style="left:1211px;top:281px;width:56px;height:11px;background:#fff;"></div>
<div class="t" style="left:1167.80px;top:282px;font-size:10px;letter-spacing:-0.822px;">Zuschlag</div>
<div class="t" style="left:1212.00px;top:282px;font-size:10px;">0,00%</div>
<div class="r" style="left:1163px;top:305px;width:108px;height:100px;background:#e0e0e0;border:1px solid #aaa696;box-sizing:border-box;box-shadow:1px 1px 0 #fafafa;"></div>
<div class="r" style="left:1164px;top:306px;width:106px;height:19px;background:#c0c0c0;"></div>
<div class="r" style="left:1164px;top:325px;width:106px;height:1px;background:#aaa696;"></div>
<div class="t" style="left:1170.40px;top:311px;font-size:11px;color:#505050;">Material</div>
<svg style="left:1253px;top:313px" width="9" height="6" viewBox="0 0 9 6"><path d="M1.5 4.5L4.5 1.5L7.5 4.5Z" fill="#222"/></svg>
<div class="r" style="left:1211px;top:329px;width:56px;height:11px;background:#fff;"></div>
<div class="t" style="left:1167.80px;top:330px;font-size:10px;letter-spacing:-0.519px;">LP/Einh</div>
<div class="r" style="left:1211px;top:341px;width:56px;height:11px;background:#fff;"></div>
<div class="t" style="left:1167.80px;top:342px;font-size:10px;letter-spacing:-0.563px;">Bez.-Rab.</div>
<div class="r" style="left:1211px;top:353px;width:56px;height:11px;background:#fff;"></div>
<div class="t" style="left:1167.80px;top:354px;font-size:10px;letter-spacing:-0.449px;">EK/Einh</div>
<div class="t" style="left:1212.00px;top:354px;font-size:10px;">0,00 €</div>
<div class="r" style="left:1211px;top:365px;width:56px;height:11px;background:#f0f0f0;"></div>
<div class="t" style="left:1167.80px;top:366px;font-size:10px;letter-spacing:-0.208px;">EK Total</div>
<div class="t" style="left:1212.00px;top:366px;font-size:10px;">0,00 €</div>
<div class="r" style="left:1211px;top:377px;width:56px;height:11px;background:#f0f0f0;"></div>
<div class="t" style="left:1167.80px;top:378px;font-size:10px;letter-spacing:-0.133px;">VK Total</div>
<div class="t" style="left:1212.00px;top:378px;font-size:10px;">0,00 €</div>
<div class="r" style="left:1211px;top:389px;width:56px;height:11px;background:#f0f0f0;"></div>
<div class="t" style="left:1167.80px;top:390px;font-size:10px;letter-spacing:-0.224px;">Faktor</div>
<div class="r" style="left:1163px;top:413px;width:108px;height:64px;background:#e0e0e0;border:1px solid #aaa696;box-sizing:border-box;box-shadow:1px 1px 0 #fafafa;"></div>
<div class="r" style="left:1164px;top:414px;width:106px;height:19px;background:#c0c0c0;"></div>
<div class="r" style="left:1164px;top:433px;width:106px;height:1px;background:#aaa696;"></div>
<div class="t" style="left:1170.40px;top:419px;font-size:11px;color:#505050;">Lohn</div>
<svg style="left:1253px;top:421px" width="9" height="6" viewBox="0 0 9 6"><path d="M1.5 4.5L4.5 1.5L7.5 4.5Z" fill="#222"/></svg>
<div class="r" style="left:1211px;top:437px;width:56px;height:11px;background:#f0f0f0;"></div>
<div class="t" style="left:1167.80px;top:438px;font-size:10px;letter-spacing:-0.208px;">EK Total</div>
<div class="t" style="left:1212.00px;top:438px;font-size:10px;">0,00 €</div>
<div class="r" style="left:1211px;top:449px;width:56px;height:11px;background:#f0f0f0;"></div>
<div class="t" style="left:1167.80px;top:450px;font-size:10px;letter-spacing:-0.133px;">VK Total</div>
<div class="t" style="left:1212.00px;top:450px;font-size:10px;">0,00 €</div>
<div class="r" style="left:1211px;top:461px;width:56px;height:11px;background:#f0f0f0;"></div>
<div class="t" style="left:1167.80px;top:462px;font-size:10px;letter-spacing:-0.133px;">VSatz / h</div>
<div class="t" style="left:1212.00px;top:462px;font-size:10px;">0,00 €</div>
<div class="r" style="left:1163px;top:485px;width:108px;height:76px;background:#e0e0e0;border:1px solid #aaa696;box-sizing:border-box;box-shadow:1px 1px 0 #fafafa;"></div>
<div class="r" style="left:1164px;top:486px;width:106px;height:19px;background:#c0c0c0;"></div>
<div class="r" style="left:1164px;top:505px;width:106px;height:1px;background:#aaa696;"></div>
<div class="t" style="left:1170.40px;top:491px;font-size:11px;color:#505050;">Rest</div>
<svg style="left:1253px;top:493px" width="9" height="6" viewBox="0 0 9 6"><path d="M1.5 4.5L4.5 1.5L7.5 4.5Z" fill="#222"/></svg>
<div class="r" style="left:1211px;top:509px;width:56px;height:11px;background:#f0f0f0;"></div>
<div class="t" style="left:1167.80px;top:510px;font-size:10px;letter-spacing:-0.448px;">EK Rohst.</div>
<div class="t" style="left:1212.00px;top:510px;font-size:10px;">0,00 €</div>
<div class="r" style="left:1211px;top:521px;width:56px;height:11px;background:#f0f0f0;"></div>
<div class="t" style="left:1167.80px;top:522px;font-size:10px;letter-spacing:-0.392px;">VK Rohst.</div>
<div class="t" style="left:1212.00px;top:522px;font-size:10px;">0,00 €</div>
<div class="r" style="left:1211px;top:533px;width:56px;height:11px;background:#f0f0f0;"></div>
<div class="t" style="left:1167.80px;top:534px;font-size:10px;letter-spacing:-0.387px;">EK Sonst.</div>
<div class="t" style="left:1212.00px;top:534px;font-size:10px;">0,00 €</div>
<div class="r" style="left:1211px;top:545px;width:56px;height:11px;background:#f0f0f0;"></div>
<div class="t" style="left:1167.80px;top:546px;font-size:10px;letter-spacing:-0.276px;">VK Sonst.</div>
<div class="t" style="left:1212.00px;top:546px;font-size:10px;">0,00 €</div>
<div class="r" style="left:1163px;top:569px;width:108px;height:76px;background:#e0e0e0;border:1px solid #aaa696;box-sizing:border-box;box-shadow:1px 1px 0 #fafafa;"></div>
<div class="r" style="left:1164px;top:570px;width:106px;height:19px;background:#c0c0c0;"></div>
<div class="r" style="left:1164px;top:589px;width:106px;height:1px;background:#aaa696;"></div>
<div class="t" style="left:1170.40px;top:575px;font-size:11px;color:#505050;">Zeit</div>
<svg style="left:1253px;top:577px" width="9" height="6" viewBox="0 0 9 6"><path d="M1.5 4.5L4.5 1.5L7.5 4.5Z" fill="#222"/></svg>
<div class="r" style="left:1211px;top:593px;width:56px;height:11px;background:#fff;"></div>
<div class="t" style="left:1167.80px;top:594px;font-size:10px;letter-spacing:-0.363px;">Min/Einh</div>
<div class="t" style="left:1212.00px;top:594px;font-size:10px;">0</div>
<div class="r" style="left:1211px;top:605px;width:56px;height:11px;background:#fff;"></div>
<div class="t" style="left:1167.80px;top:606px;font-size:10px;letter-spacing:-0.398px;">Zeit Ges.</div>
<div class="t" style="left:1212.00px;top:606px;font-size:10px;">0</div>
<div class="r" style="left:1211px;top:617px;width:56px;height:11px;background:#fff;"></div>
<div class="t" style="left:1167.80px;top:618px;font-size:10px;letter-spacing:-0.436px;">Manntage</div>
<div class="t" style="left:1212.00px;top:618px;font-size:10px;">0,0</div>
<div class="r" style="left:1211px;top:629px;width:56px;height:11px;background:#f0f0f0;"></div>
<div class="r" style="left:1243px;top:629px;width:1px;height:11px;background:#e0e0e0;"></div>
<div class="t" style="left:1167.80px;top:630px;font-size:10px;letter-spacing:-0.307px;">Leistg. / h</div>
<div class="t" style="left:1212.00px;top:630px;font-size:10px;">0,00</div>
<div class="r" style="left:1163px;top:653px;width:108px;height:88px;background:#e0e0e0;border:1px solid #aaa696;box-sizing:border-box;box-shadow:1px 1px 0 #fafafa;"></div>
<div class="r" style="left:1164px;top:654px;width:106px;height:19px;background:#c0c0c0;"></div>
<div class="r" style="left:1164px;top:673px;width:106px;height:1px;background:#aaa696;"></div>
<div class="t" style="left:1170.40px;top:659px;font-size:11px;color:#505050;">DB</div>
<svg style="left:1253px;top:661px" width="9" height="6" viewBox="0 0 9 6"><path d="M1.5 4.5L4.5 1.5L7.5 4.5Z" fill="#222"/></svg>
<div class="r" style="left:1211px;top:677px;width:56px;height:11px;background:#fff;"></div>
<div class="t" style="left:1167.80px;top:678px;font-size:10px;letter-spacing:-0.113px;">DB I</div>
<div class="t" style="left:1212.00px;top:678px;font-size:10px;">0,00 €</div>
<div class="r" style="left:1211px;top:689px;width:56px;height:11px;background:#fff;"></div>
<div class="t" style="left:1167.80px;top:690px;font-size:10px;letter-spacing:-0.334px;">DB I / h</div>
<div class="t" style="left:1212.00px;top:690px;font-size:10px;">0,00 €</div>
<div class="r" style="left:1211px;top:701px;width:56px;height:11px;background:#f0f0f0;"></div>
<div class="t" style="left:1167.80px;top:702px;font-size:10px;letter-spacing:-0.415px;">DB I %</div>
<div class="t" style="left:1212.00px;top:702px;font-size:10px;">0,00%</div>
<div class="r" style="left:1211px;top:713px;width:56px;height:11px;background:#f0f0f0;"></div>
<div class="t" style="left:1167.80px;top:714px;font-size:10px;letter-spacing:-0.356px;">DB II</div>
<div class="t" style="left:1212.00px;top:714px;font-size:10px;">0,00 €</div>
<div class="r" style="left:1211px;top:725px;width:56px;height:11px;background:#f0f0f0;"></div>
<div class="t" style="left:1167.80px;top:726px;font-size:10px;letter-spacing:0.207px;">DB II / h</div>
<div class="t" style="left:1212.00px;top:726px;font-size:10px;">0,00 €</div>
<div class="r" style="left:0px;top:751px;width:778px;height:1px;background:#a0a0a0;"></div>
<div class="r" style="left:0px;top:751px;width:1px;height:19px;background:#a0a0a0;"></div>
<div class="t" style="left:5.80px;top:755px;font-size:12px;letter-spacing:0.150px;">Enthält die Belegnummer.</div>
<div class="r" style="left:781px;top:751px;width:107px;height:1px;background:#a0a0a0;"></div>
<div class="r" style="left:781px;top:751px;width:1px;height:19px;background:#a0a0a0;"></div>
<div class="r" style="left:887px;top:752px;width:1px;height:18px;background:#fafafa;"></div>
<div class="t" style="left:788.50px;top:755px;font-size:12px;letter-spacing:0.018px;">Vorgang.Position</div>
<div class="r" style="left:890px;top:751px;width:78px;height:1px;background:#a0a0a0;"></div>
<div class="r" style="left:890px;top:751px;width:1px;height:19px;background:#a0a0a0;"></div>
<div class="r" style="left:967px;top:752px;width:1px;height:18px;background:#fafafa;"></div>
<div class="t" style="left:897.00px;top:755px;font-size:12px;letter-spacing:0.664px;">2. Angebot</div>
<div class="r" style="left:970px;top:751px;width:41px;height:1px;background:#a0a0a0;"></div>
<div class="r" style="left:970px;top:751px;width:1px;height:19px;background:#a0a0a0;"></div>
<div class="r" style="left:1010px;top:752px;width:1px;height:18px;background:#fafafa;"></div>
<div class="t" style="left:977.00px;top:755px;font-size:12px;letter-spacing:0.062px;">adler</div>
<div class="r" style="left:1013px;top:751px;width:39px;height:1px;background:#a0a0a0;"></div>
<div class="r" style="left:1013px;top:751px;width:1px;height:19px;background:#a0a0a0;"></div>
<div class="r" style="left:1051px;top:752px;width:1px;height:18px;background:#fafafa;"></div>
<div class="t" style="left:1025.00px;top:755px;font-size:12px;">#4</div>
<div class="r" style="left:1054px;top:751px;width:206px;height:1px;background:#a0a0a0;"></div>
<div class="r" style="left:1054px;top:751px;width:1px;height:19px;background:#a0a0a0;"></div>
<div class="r" style="left:1259px;top:752px;width:1px;height:18px;background:#fafafa;"></div>
<div class="t" style="left:1061.00px;top:755px;font-size:12px;letter-spacing:0.095px;">admin - Moser-Dokumentation.mdb</div></body></html>
